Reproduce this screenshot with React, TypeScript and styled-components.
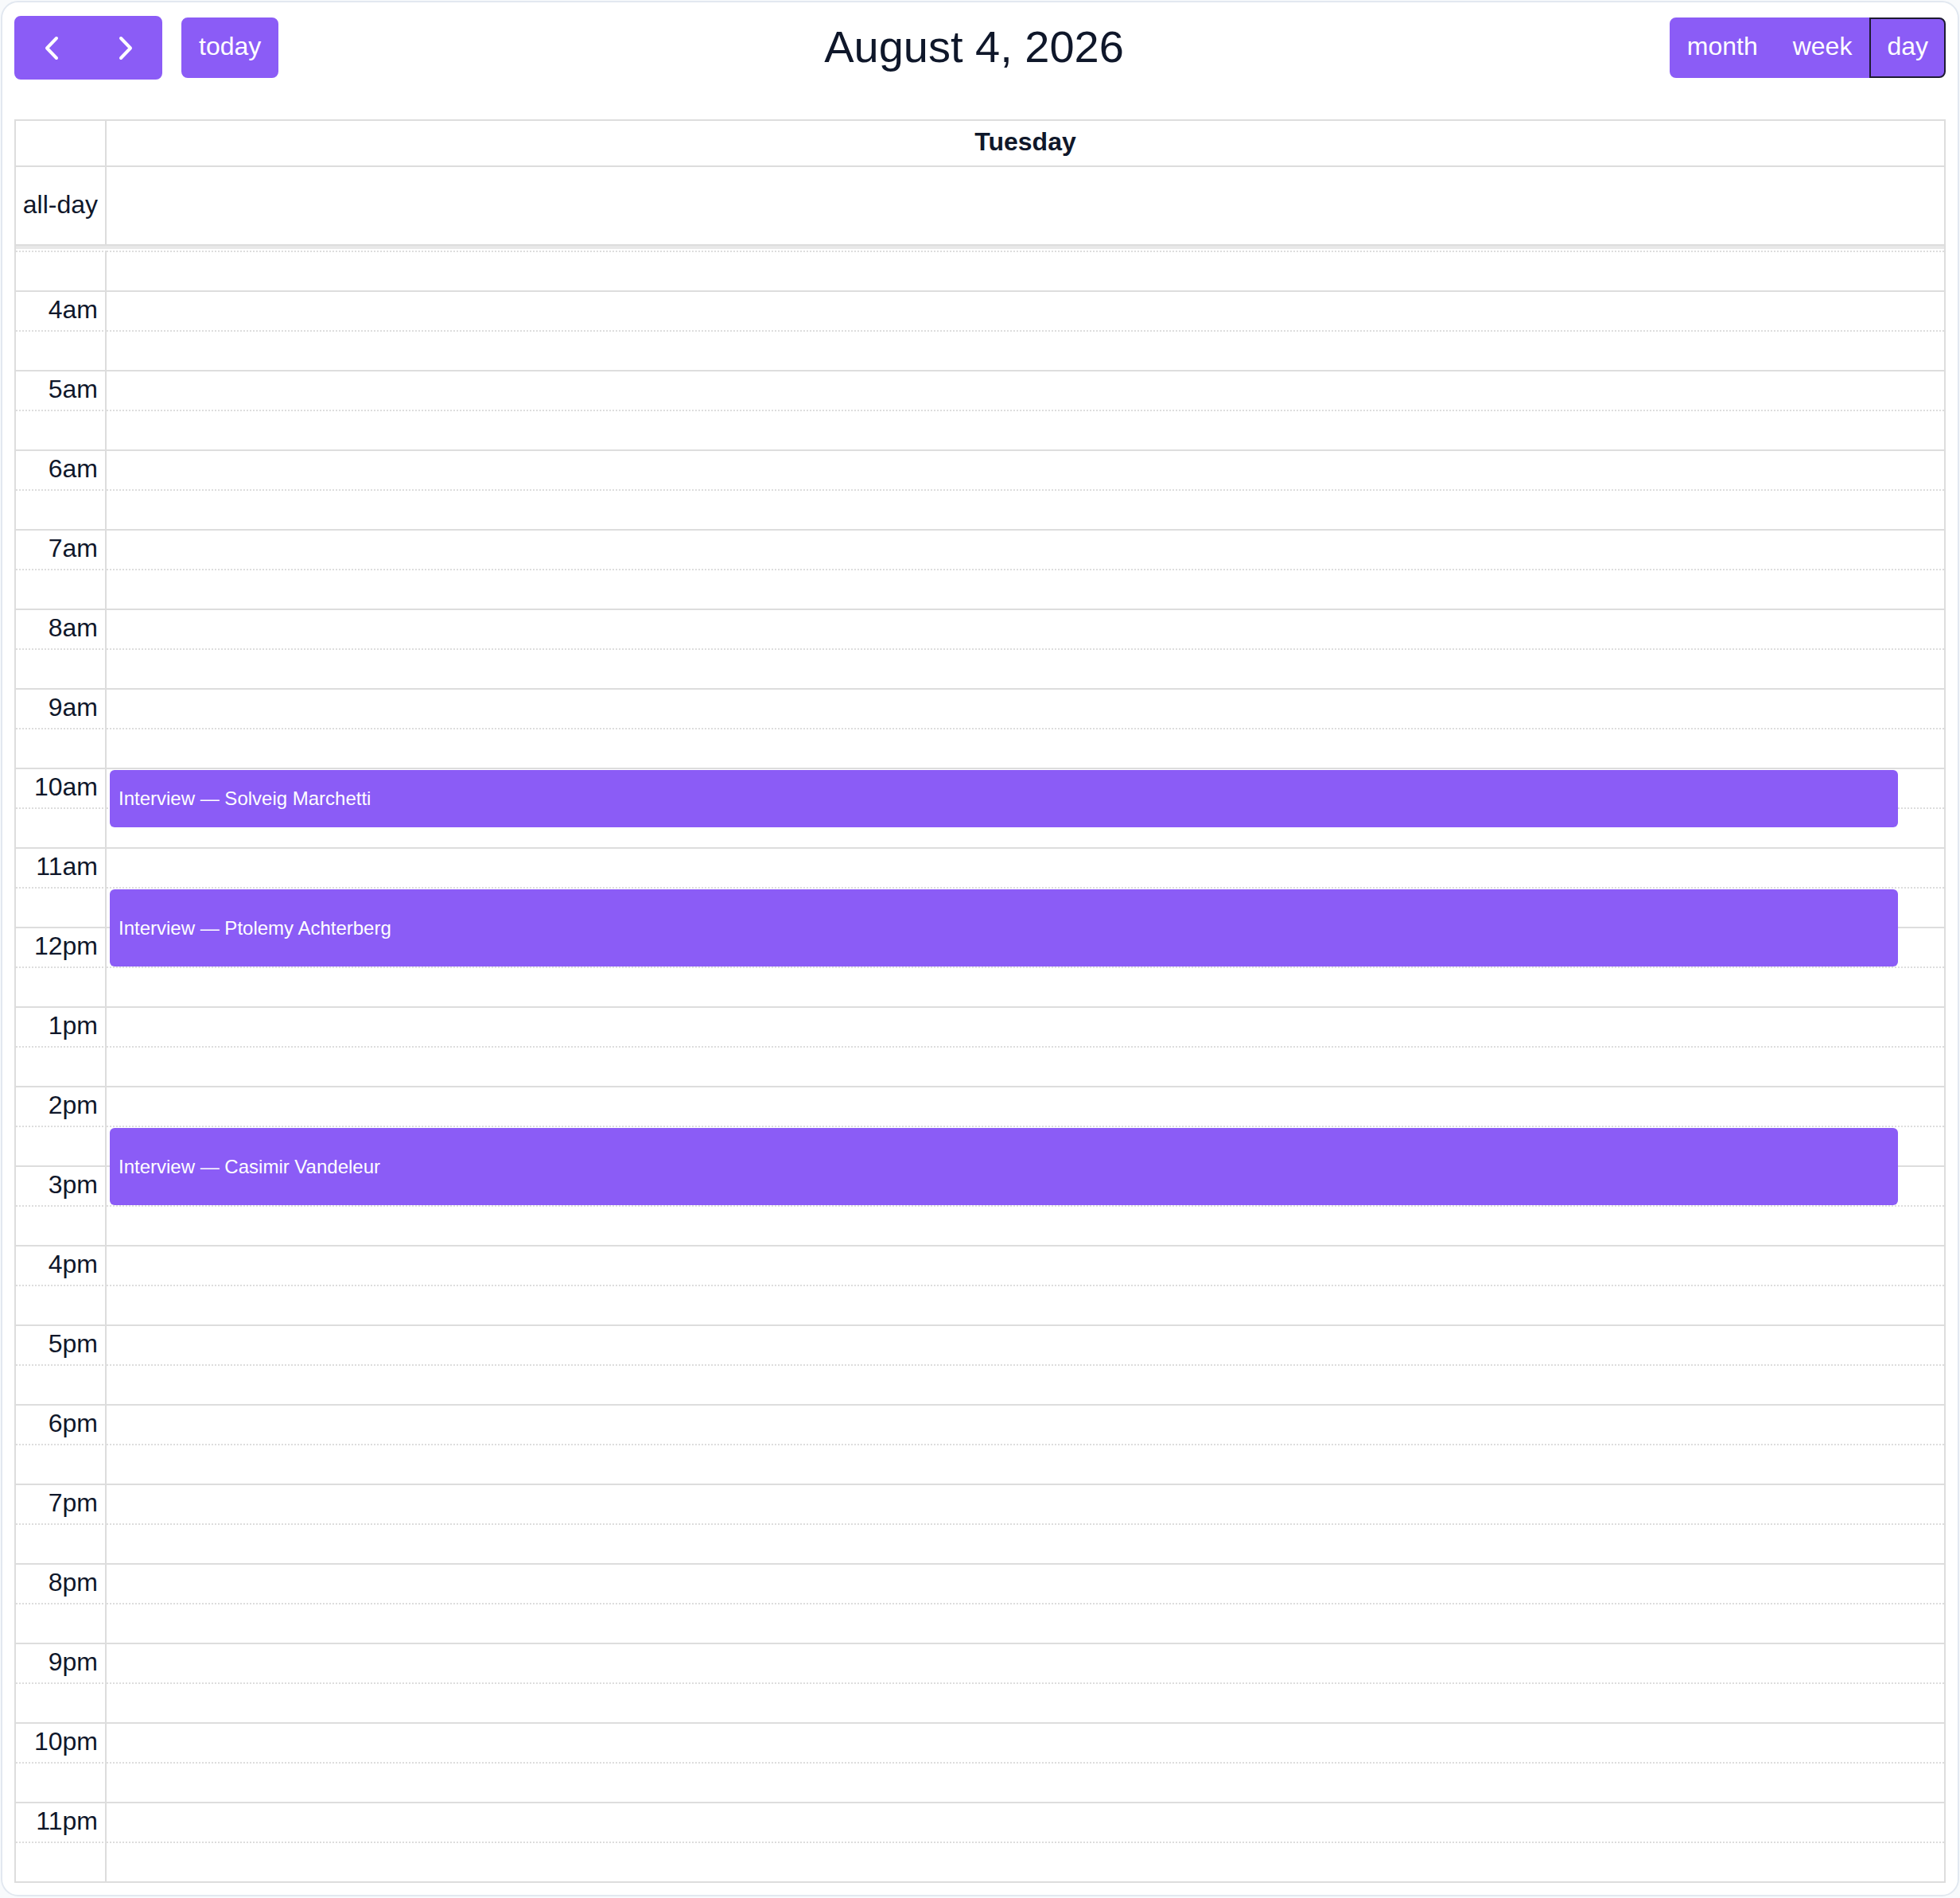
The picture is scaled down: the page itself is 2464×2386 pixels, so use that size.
import React from "react";
import styled, { createGlobalStyle } from "styled-components";

const PURPLE = "#8b5cf6";
const LINE = "#dddddd";
const INK = "#0f172a";
const HOUR = 100;
const FIRST_SLOT = 3.5;
const SLOT_COUNT = 41;

const events = [
  { title: "Interview — Solveig Marchetti", start: 10, end: 10.75 },
  { title: "Interview — Ptolemy Achterberg", start: 11.5, end: 12.5 },
  { title: "Interview — Casimir Vandeleur", start: 14.5, end: 15.5 },
];

function hourLabel(h: number) {
  const n = h % 12 === 0 ? 12 : h % 12;
  return `${n}${h < 12 ? "am" : "pm"}`;
}

export default function App() {
  const slots = Array.from({ length: SLOT_COUNT }, (_, i) => FIRST_SLOT + i * 0.5);

  return (
    <>
      <Global />
      <Page>
        <Card>
          <Toolbar>
            <Chunk>
              <Group>
                <NavButton aria-label="prev">
                  <svg width="18" height="31" viewBox="0 0 18 31">
                    <polyline points="15,3 3,15.5 15,28" fill="none" stroke="#fff" strokeWidth="4" strokeLinecap="round" strokeLinejoin="round" />
                  </svg>
                </NavButton>
                <NavButton aria-label="next">
                  <svg width="18" height="31" viewBox="0 0 18 31">
                    <polyline points="3,3 15,15.5 3,28" fill="none" stroke="#fff" strokeWidth="4" strokeLinecap="round" strokeLinejoin="round" />
                  </svg>
                </NavButton>
              </Group>
              <Button $round>today</Button>
            </Chunk>
            <Title>August 4, 2026</Title>
            <Chunk>
              <Group>
                <Button $first>month</Button>
                <Button>week</Button>
                <Button $last $active>day</Button>
              </Group>
            </Chunk>
          </Toolbar>

          <Grid>
            <Row $bordered>
              <AxisCell $h={56} />
              <DayHead>Tuesday</DayHead>
            </Row>
            <Row $bordered>
              <AxisCell $h={97}>
                <AllDayLabel>all-day</AllDayLabel>
              </AxisCell>
              <div />
            </Row>
            <Divider />
            <Slots>
              {slots.map((t) => {
                const hour = Number.isInteger(t);
                return (
                  <Row key={t}>
                    <SlotAxis $hour={hour}>{hour && <Label>{hourLabel(t)}</Label>}</SlotAxis>
                    <SlotLane $hour={hour} />
                  </Row>
                );
              })}
              <EventColumn>
                {events.map((e) => (
                  <Event
                    key={e.title}
                    style={{
                      top: (e.start - FIRST_SLOT) * HOUR + 3,
                      height: (e.end - e.start) * HOUR - 3,
                    }}
                  >
                    {e.title}
                  </Event>
                ))}
              </EventColumn>
            </Slots>
          </Grid>
        </Card>
      </Page>
    </>
  );
}

const Global = createGlobalStyle`
  html, body {
    margin: 0;
    background: #f8fafc;
  }
  * {
    box-sizing: border-box;
  }
`;

const Page = styled.div`
  padding: 1px;
  font-family: "Liberation Sans", Arial, sans-serif;
  color: ${INK};
`;

const Card = styled.div`
  background: #fff;
  border: 2px solid #e2e8f0;
  border-radius: 22px;
  padding: 17px 15px 15px 15px;
`;

const Toolbar = styled.div`
  display: flex;
  align-items: center;
  justify-content: space-between;
  height: 80px;
  margin-bottom: 50px;
`;

const Chunk = styled.div`
  display: flex;
  align-items: center;
  gap: 24px;
`;

const Title = styled.h2`
  margin: 0 0 3px;
  font-size: 56px;
  line-height: 1.1;
  font-weight: 400;
  color: ${INK};
`;

const Group = styled.div`
  display: flex;
  align-items: center;
`;

const Button = styled.button<{ $round?: boolean; $first?: boolean; $last?: boolean; $active?: boolean }>`
  height: 76px;
  padding: 0 20px 3px;
  font-family: "Liberation Sans", Arial, sans-serif;
  font-size: 32px;
  color: #fff;
  background: ${PURPLE};
  border: 2px solid ${(p) => (p.$active ? "#1e1b33" : PURPLE)};
  border-radius: ${(p) =>
    p.$round ? "8px" : p.$first ? "8px 0 0 8px" : p.$last ? "0 8px 8px 0" : "0"};
  display: flex;
  align-items: center;
  justify-content: center;
`;

const NavButton = styled.button`
  width: 93px;
  height: 80px;
  background: ${PURPLE};
  border: 2px solid ${PURPLE};
  display: flex;
  align-items: center;
  justify-content: center;
  padding: 0;
  &:first-child {
    border-radius: 8px 0 0 8px;
  }
  &:last-child {
    border-radius: 0 8px 8px 0;
  }
`;

const Grid = styled.div`
  border: 2px solid ${LINE};
`;

const Row = styled.div<{ $bordered?: boolean }>`
  display: grid;
  grid-template-columns: 114px 1fr;
  border-bottom: ${(p) => (p.$bordered ? `2px solid ${LINE}` : "none")};
`;

const AxisCell = styled.div<{ $h: number }>`
  height: ${(p) => p.$h}px;
  border-right: 2px solid ${LINE};
  display: flex;
  align-items: center;
  justify-content: flex-end;
  padding: 0 9px 3px 0;
`;

const DayHead = styled.div`
  height: 56px;
  display: flex;
  align-items: center;
  justify-content: center;
  padding-bottom: 4px;
  font-size: 32px;
  font-weight: 700;
  color: ${INK};
`;

const AllDayLabel = styled.span`
  font-size: 32px;
`;

const Divider = styled.div`
  height: 6px;
  background: #e8e8e8;
  border-bottom: 2px solid #fff;
`;

const Slots = styled.div`
  position: relative;
`;

const SlotAxis = styled.div<{ $hour: boolean }>`
  height: 50px;
  border-top: 2px ${(p) => (p.$hour ? "solid" : "dotted")} ${LINE};
  border-right: 2px solid ${LINE};
  display: flex;
  align-items: center;
  justify-content: flex-end;
  padding: 0 9px 3px 0;
`;

const SlotLane = styled.div<{ $hour: boolean }>`
  height: 50px;
  border-top: 2px ${(p) => (p.$hour ? "solid" : "dotted")} ${LINE};
`;

const Label = styled.span`
  font-size: 32px;
  color: ${INK};
`;

const EventColumn = styled.div`
  position: absolute;
  top: 0;
  bottom: 0;
  left: 114px;
  right: 0;
`;

const Event = styled.div`
  position: absolute;
  left: 4px;
  right: 2.5%;
  background: ${PURPLE};
  border-radius: 6px;
  color: #fff;
  font-size: 24px;
  display: flex;
  align-items: center;
  padding-left: 11px;
  white-space: nowrap;
  overflow: hidden;
`;
